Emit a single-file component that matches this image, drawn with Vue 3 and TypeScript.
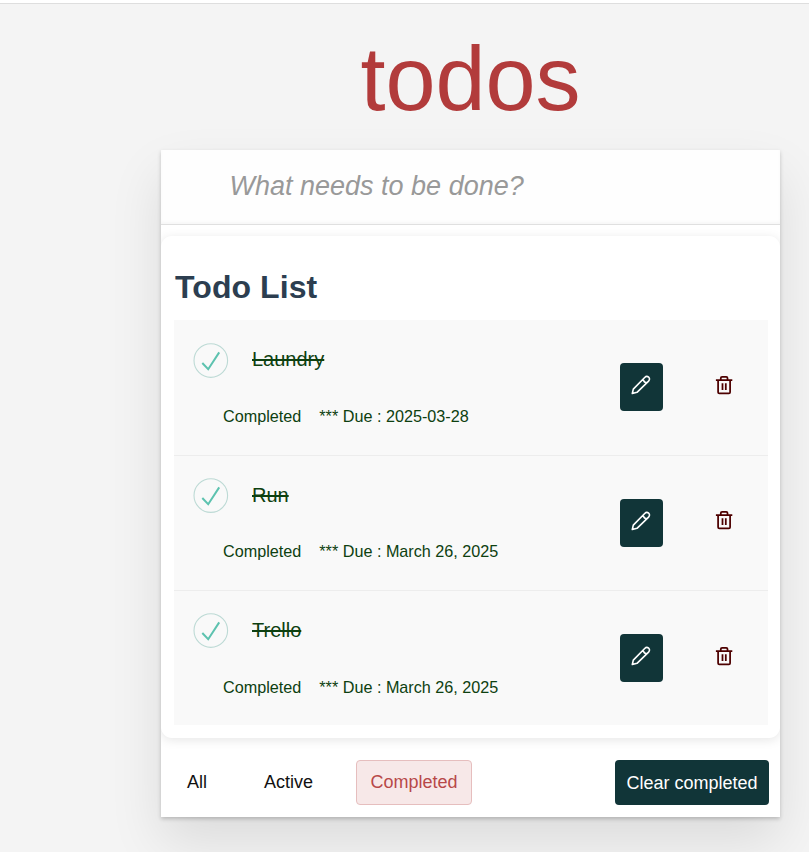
<script setup lang="ts">
import { ref } from 'vue'

interface Todo {
  id: number
  title: string
  status: string
  due: string
}

const todos = ref<Todo[]>([
  { id: 1, title: 'Laundry', status: 'Completed', due: '2025-03-28' },
  { id: 2, title: 'Run', status: 'Completed', due: 'March 26, 2025' },
  { id: 3, title: 'Trello', status: 'Completed', due: 'March 26, 2025' },
])

const filters: string[] = ['All', 'Active', 'Completed']
const current = ref('Completed')
const draft = ref('')

function remove(id: number): void {
  todos.value = todos.value.filter((t) => t.id !== id)
}
</script>

<template>
  <div class="page">
    <div class="topbar"></div>
    <main class="shell">
      <h1 class="title">todos</h1>
      <section class="app">
        <input v-model="draft" class="new-todo" placeholder="What needs to be done?" />
        <div class="panel">
          <h2 class="heading">Todo List</h2>
          <ul class="list">
            <li v-for="todo in todos" :key="todo.id" class="row">
              <div class="info">
                <div class="line">
                  <svg class="check" viewBox="0 0 36 36" width="36" height="36">
                    <circle cx="17.8" cy="18.6" r="16.8" fill="none" stroke="#bddad5" stroke-width="1.1" />
                    <path d="M9.3 21 15.2 27.2 26.2 10.4" fill="none" stroke="#5dc2af" stroke-width="2" />
                  </svg>
                  <span class="name">{{ todo.title }}</span>
                </div>
                <div class="meta">
                  <span>{{ todo.status }}</span>
                  <span>*** Due : {{ todo.due }}</span>
                </div>
              </div>
              <button class="edit" aria-label="Edit">
                <svg viewBox="0 0 20 20" width="20" height="20" fill="none" stroke="#fff" stroke-width="1.6" stroke-linejoin="round">
                  <path d="M1.3 18.5 2.3 14.1 13.7 2.5C14.9 1.3 16.5 1.2 17.6 2.2 18.8 3.3 18.8 4.9 17.6 6.1L6 17.3 1.3 18.5ZM12.2 4.1C12.5 6.2 13.9 7.6 16 7.6" />
                </svg>
              </button>
              <button class="trash" aria-label="Delete" @click="remove(todo.id)">
                <svg viewBox="0 0 18 20" width="18" height="20" fill="none" stroke="#4d0000" stroke-width="1.75" stroke-linejoin="round">
                  <path d="M.9 5H17.3M5.8 4.8V3.1Q5.8 1.8 7.1 1.8H11.2Q12.5 1.8 12.5 3.1V4.8M3.1 5V17.2Q3.1 18.4 4.3 18.4H13.9Q15.1 18.4 15.1 17.2V5M7.5 8.3V15M10.8 8.3V15" />
                </svg>
              </button>
            </li>
          </ul>
        </div>
        <footer class="footer">
          <nav class="filters">
            <button
              v-for="f in filters"
              :key="f"
              class="filter"
              :class="{ selected: f === current }"
              @click="current = f"
            >{{ f }}</button>
          </nav>
          <button class="clear">Clear completed</button>
        </footer>
      </section>
    </main>
  </div>
</template>

<style>
body {
  background: #f4f4f4;
}
</style>

<style scoped>
.page {
  height: 852px;
  overflow: hidden;
  box-sizing: border-box;
  background: #f4f4f4;
  font-family: "Liberation Sans", Arial, sans-serif;
}
.topbar {
  height: 3px;
  background: #fff;
  border-bottom: 1px solid #dedede;
}
.shell {
  width: 619px;
  margin-left: 161px;
}
.title {
  margin: 0;
  height: 146px;
  line-height: 150px;
  text-align: center;
  font-size: 90px;
  font-weight: 400;
  color: #b23b3b;
}
.app {
  height: 667px;
  background: #fff;
  box-shadow: 0 2px 4px rgba(0, 0, 0, 0.2), 0 25px 50px rgba(0, 0, 0, 0.1);
}
.new-todo {
  display: block;
  box-sizing: border-box;
  width: 100%;
  height: 75px;
  padding: 0 18px 2px 68.5px;
  border: 0;
  border-bottom: 1px solid #e0e0e0;
  outline: 0;
  background: #fefefe;
  box-shadow: inset 0 -2px 3px rgba(0, 0, 0, 0.03);
  font: italic 27px "Liberation Sans", Arial, sans-serif;
}
.new-todo::placeholder {
  color: #999;
  opacity: 1;
}
.panel {
  box-sizing: border-box;
  height: 502px;
  margin-top: 11px;
  padding: 31px 12px 13px 13px;
  border-radius: 11px;
  background: #fff;
  box-shadow: 0 2px 11px rgba(0, 0, 0, 0.1);
  clip-path: inset(-11px 0 -20px 0);
}
.heading {
  margin: 0;
  height: 53.4px;
  padding-left: 1px;
  line-height: 40px;
  font-size: 32px;
  font-weight: 700;
  letter-spacing: 0.08px;
  color: #2c3e50;
}
.list {
  margin: 0;
  padding: 0;
  list-style: none;
  background: #f9f9f9;
}
.row {
  display: flex;
  align-items: flex-start;
  box-sizing: border-box;
  height: 135.3px;
  border-bottom: 1px solid #ededed;
}
.row:last-child {
  height: 134.3px;
  border-bottom: 0;
}
.info {
  flex: 1;
  padding: 22px 0 0 19px;
}
.line {
  display: flex;
  height: 36px;
}
.name {
  margin-left: 23px;
  line-height: 34px;
  font-size: 20px;
  color: #0d4010;
  text-decoration: line-through;
}
.check {
  flex: none;
  margin-top: -0.6px;
}
.meta {
  display: flex;
  gap: 18px;
  padding: 27.7px 0 0 30px;
  line-height: 20px;
  font-size: 16.2px;
  color: #0d4010;
}
.edit,
.trash {
  display: flex;
  justify-content: center;
  padding: 0;
  border: 0;
  cursor: pointer;
}
.edit {
  width: 43px;
  height: 48px;
  margin: 43px 0 0;
  padding: 12px 1px 0 0;
  border-radius: 4px;
  background: #113538;
}
.trash {
  width: 40px;
  margin: 54.7px 24px 0 41px;
  background: none;
}
.footer {
  display: flex;
  align-items: center;
  justify-content: space-between;
  padding: 22px 11px 0 12px;
}
.filters {
  display: flex;
  gap: 29px;
}
.filter,
.clear {
  box-sizing: border-box;
  height: 45px;
  padding: 0 13px 1px;
  border: 1px solid transparent;
  border-radius: 4px;
  background: none;
  font: 18px "Liberation Sans", Arial, sans-serif;
  color: #111;
  cursor: pointer;
}
.filter.selected {
  width: 116px;
  border-color: #e6bebe;
  background: #f7e8e8;
  color: #b84848;
}
.clear {
  width: 154px;
  padding: 1px 0 0;
  background: #113538;
  color: #fff;
}
</style>
